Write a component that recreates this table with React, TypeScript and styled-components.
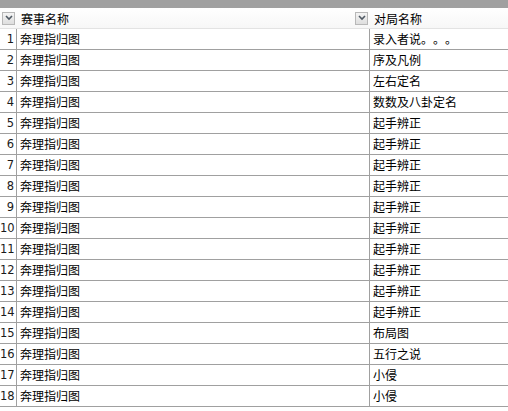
import React from "react";
import styled, { createGlobalStyle } from "styled-components";

const Global = createGlobalStyle`
  html, body { margin: 0; padding: 0; background: #ffffff; }
  body { font-family: "Liberation Sans", "Noto Sans CJK SC", sans-serif; font-size: 12px; color: #000; }
`;

const Page = styled.div`
  width: 508px;
  height: 411px;
  overflow: hidden;
  background: #fff;
`;

const TopBar = styled.div`
  height: 8px;
  background: #a0a0a0;
`;

const Grid = styled.div`
  display: grid;
  grid-template-columns: 17px 353px 1fr;
`;

const HeaderCell = styled.div<{ $pad: number }>`
  height: 21px;
  display: flex;
  align-items: center;
  gap: 5px;
  padding-left: ${(p) => p.$pad}px;
  padding-right: 2px;
  background: linear-gradient(#ffffff, #f7f7f7);
  border-bottom: 1px solid #e3e3e3;
  box-sizing: border-box;
  white-space: nowrap;
`;

const HeaderLabel = styled.span`
  flex: 1;
  font-family: "Noto Sans CJK SC", sans-serif;
  font-size: 12px;
`;

const DropBox = styled.div`
  width: 13px;
  height: 13px;
  box-sizing: border-box;
  border: 1px solid #b8b8b8;
  background: linear-gradient(#f4f4f4, #dedede);
  display: flex;
  align-items: center;
  justify-content: center;
  flex: none;
`;

const NumCell = styled.div`
  height: 21px;
  box-sizing: border-box;
  border-bottom: 1px solid #a0a0a0;
  border-right: 1px solid #a0a0a0;
  text-align: right;
  padding-right: 2px;
  line-height: 20px;
  font-family: "DejaVu Sans", sans-serif;
  font-size: 11.5px;
  color: #1a1a1a;
`;

const TextCell = styled.div<{ $last?: boolean }>`
  height: 21px;
  box-sizing: border-box;
  border-bottom: 1px solid #a0a0a0;
  border-right: ${(p) => (p.$last ? "none" : "1px solid #a0a0a0")};
  padding-left: 3px;
  line-height: 20px;
  font-family: "Noto Sans CJK SC", sans-serif;
  font-size: 12px;
  white-space: nowrap;
  overflow: hidden;
  text-spacing-trim: space-all;
  font-feature-settings: "halt" 0, "chws" 0;
`;

const Chevron = () => (
  <svg width="8" height="6" viewBox="0 0 8 6">
    <path d="M1 1 L4 4 L7 1" fill="none" stroke="#505a64" strokeWidth="1.6" />
  </svg>
);

const names = [
  "录入者说。。。",
  "序及凡例",
  "左右定名",
  "数数及八卦定名",
  "起手辨正",
  "起手辨正",
  "起手辨正",
  "起手辨正",
  "起手辨正",
  "起手辨正",
  "起手辨正",
  "起手辨正",
  "起手辨正",
  "起手辨正",
  "布局图",
  "五行之说",
  "小侵",
  "小侵",
];

export default function App() {
  return (
    <Page>
      <Global />
      <TopBar />
      <Grid>
        <HeaderCell $pad={2}>
          <DropBox>
            <Chevron />
          </DropBox>
        </HeaderCell>
        <HeaderCell $pad={4}>
          <HeaderLabel>赛事名称</HeaderLabel>
          <DropBox>
            <Chevron />
          </DropBox>
        </HeaderCell>
        <HeaderCell $pad={4}>
          <HeaderLabel>对局名称</HeaderLabel>
        </HeaderCell>
        {names.map((n, i) => (
          <React.Fragment key={i}>
            <NumCell>{i + 1}</NumCell>
            <TextCell>奔理指归图</TextCell>
            <TextCell $last>{n}</TextCell>
          </React.Fragment>
        ))}
      </Grid>
    </Page>
  );
}
